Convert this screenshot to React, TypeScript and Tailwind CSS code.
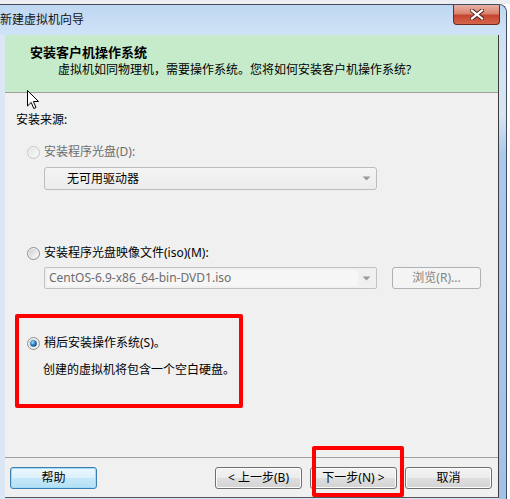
import React from "react";

type RS = "off" | "on" | "disabled";

function Radio({ state }: { state: RS }) {
  const dis = state === "disabled";
  return (
    <svg width="13" height="13" viewBox="0 0 13 13" className="shrink-0">
      <defs>
        <linearGradient id={`rg-${state}`} x1="0" y1="0" x2="1" y2="1">
          <stop offset="0" stopColor={dis ? "#e4e4e4" : "#cdcdcd"} />
          <stop offset="1" stopColor={dis ? "#f9f9f9" : "#fbfbfb"} />
        </linearGradient>
        <radialGradient id="rdot" cx="0.38" cy="0.35" r="0.75">
          <stop offset="0" stopColor="#a8e4ff" />
          <stop offset="0.45" stopColor="#2d86c9" />
          <stop offset="1" stopColor="#0c3b66" />
        </radialGradient>
      </defs>
      <circle cx="6.5" cy="6.5" r="6" fill={dis ? "#f3f3f3" : "#f1f1f1"} stroke={dis ? "#c6c6c6" : "#8e8e8e"} />
      <circle cx="6.5" cy="6.5" r="4.6" fill={`url(#rg-${state})`} />
      {state === "on" && <circle cx="6.5" cy="6.5" r="3.3" fill="url(#rdot)" />}
    </svg>
  );
}

function Arrow() {
  return (
    <svg width="9" height="5" viewBox="0 0 9 5">
      <path d="M0.5 0.5 H8.5 L4.5 4.5 Z" fill="#9a9a9a" />
    </svg>
  );
}

function Btn({ children, focus }: { children: React.ReactNode; focus?: boolean }) {
  return (
    <div
      className={
        focus
          ? "w-[87px] h-[22px] rounded-[3px] border border-[#3c7fb1] bg-[linear-gradient(to_bottom,#ebf7fd_0%,#dcf1fc_48%,#c5e8f8_52%,#b4dff4_100%)] shadow-[inset_0_0_0_1px_#9fdcf7] flex items-center justify-center text-[12px] leading-[16px] text-black"
          : "w-[87px] h-[22px] rounded-[3px] border border-[#707070] bg-[linear-gradient(to_bottom,#f3f3f3_0%,#ececec_48%,#dedede_52%,#d3d3d3_100%)] shadow-[inset_0_0_0_1px_#fcfcfc] flex items-center justify-center text-[12px] leading-[16px] text-black"
      }
    >
      {children}
    </div>
  );
}

export default function App() {
  return (
    <div className="relative w-[510px] h-[499px] overflow-hidden bg-white font-['Noto_Sans','Noto_Sans_CJK_SC',sans-serif]">
      <div className="h-[4px] bg-[#eceef1]" />
      <div className="w-[507px] h-[495px] border-t border-r border-[#3f4d5e] rounded-tr-[8px] bg-[#d3e3f5] flex flex-col overflow-hidden">
        {/* title bar */}
        <div className="h-[30px] shrink-0 flex justify-between items-start bg-[linear-gradient(to_bottom,#bfd7f2,#d0e3f7)]">
          <div className="mt-[7px] ml-[0px] text-[12px] leading-[16px] text-[#111]">新建虚拟机向导</div>
          <div className="mr-[6px] w-[47px] h-[20px] rounded-b-[4px] border border-t-0 border-[#6b2a22] bg-[linear-gradient(to_bottom,#eab1a5_0%,#d9846f_45%,#c6452f_55%,#d4654b_100%)] flex items-center justify-center">
            <svg width="14" height="11" viewBox="0 0 14 11">
              <path d="M2 1.5 L12 9.5 M12 1.5 L2 9.5" stroke="#5a2a24" strokeWidth="4.2" strokeLinecap="square" />
              <path d="M2 1.5 L12 9.5 M12 1.5 L2 9.5" stroke="#ffffff" strokeWidth="2.2" strokeLinecap="square" />
            </svg>
          </div>
        </div>
        {/* body row */}
        <div className="flex flex-1">
          <div className="w-[5px] bg-[#dce7f5]" />
          <div className="w-[494px] h-[463px] border-r border-b border-r-[#3c3c3c] border-b-[#555] bg-[#f0f0f0] flex flex-col">
            {/* header */}
            <div className="h-[58px] shrink-0 bg-[#c6ebcb] border-b border-[#a0a0a0] pt-[9px]">
              <div className="ml-[25px] text-[13px] leading-[16px] font-bold text-black">安装客户机操作系统</div>
              <div className="ml-[53px] mt-[2px] text-[12px] leading-[16px] text-black">虚拟机如同物理机，需要操作系统。您将如何安装客户机操作系统?</div>
            </div>
            {/* main */}
            <div className="flex-1 flex flex-col pt-[19px] text-[12px] leading-[16px]">
              <div className="ml-[11px] h-[16px] text-black">安装来源:</div>
              <div className="ml-[22px] mt-[16px] h-[16px] flex items-center gap-[4px] text-[#6d6d6d]">
                <Radio state="disabled" />
                <span>安装程序光盘(D):</span>
              </div>
              <div className="ml-[39px] mt-[7px] w-[333px] h-[23px] rounded-[3px] border border-[#bcbcbc] bg-[linear-gradient(to_bottom,#f4f4f4,#ececec)] flex items-center justify-between pl-[22px] pr-[5px]">
                <span className="text-black">无可用驱动器</span>
                <Arrow />
              </div>
              <div className="ml-[22px] mt-[55px] h-[16px] flex items-center gap-[4px] text-black">
                <Radio state="off" />
                <span>安装程序光盘映像文件(iso)(M):</span>
              </div>
              <div className="mt-[6px] h-[22px] flex items-center">
                <div className="ml-[39px] w-[333px] h-[22px] rounded-[2px] border border-[#c2c2c2] bg-[#f0f0f0] flex items-center p-[2px]">
                  <div className="w-[311px] h-full bg-[#f6f6f6] flex items-center pl-[2px] text-[#6d6d6d]">CentOS-6.9-x86_64-bin-DVD1.iso</div>
                  <div className="flex-1 flex justify-center">
                    <Arrow />
                  </div>
                </div>
                <div className="ml-[15px] w-[89px] h-[22px] rounded-[3px] border border-[#adb2b5] bg-[#f4f4f4] flex items-center justify-center text-[#838383]">浏览(R)...</div>
              </div>
              <div className="ml-[22px] mt-[46px] h-[16px] flex items-center gap-[4px] text-black">
                <Radio state="on" />
                <span>稍后安装操作系统(S)。</span>
              </div>
              <div className="ml-[38px] mt-[11px] h-[16px] text-black">创建的虚拟机将包含一个空白硬盘。</div>
            </div>
            {/* buttons */}
            <div className="h-[40px] shrink-0 border-t border-t-[#a0a0a0] pt-[9px] flex items-start pl-[5px]">
              <Btn focus>帮助</Btn>
              <div className="ml-[118px] flex gap-[8px]">
                <Btn>&lt; 上一步(B)</Btn>
                <Btn>下一步(N) &gt;</Btn>
                <Btn>取消</Btn>
              </div>
            </div>
          </div>
          <div className="w-[7px] bg-[linear-gradient(to_bottom,#d0e1f4_0px,#d9e5f2_80px,#aac9ec_120px,#a2c2e8_100%)]" />
        </div>
      </div>

      {/* annotation boxes */}
      <div className="absolute left-[15px] top-[314px] w-[228px] h-[94px] border-4 border-[#ff0000] rounded-[2px] pointer-events-none" />
      <div className="absolute left-[312px] top-[446px] w-[92px] h-[51px] border-4 border-[#ff0000] rounded-[2px] pointer-events-none" />

      {/* mouse cursor */}
      <svg className="absolute left-[27px] top-[90px]" width="13" height="20" viewBox="0 0 13 20">
        <path d="M0.5 0.5 L0.5 16 L4.2 12.4 L6.8 18.5 L9 17.5 L6.4 11.5 L11.5 11.5 Z" fill="#ffffff" stroke="#000000" strokeWidth="1" strokeLinejoin="miter" />
      </svg>
    </div>
  );
}
